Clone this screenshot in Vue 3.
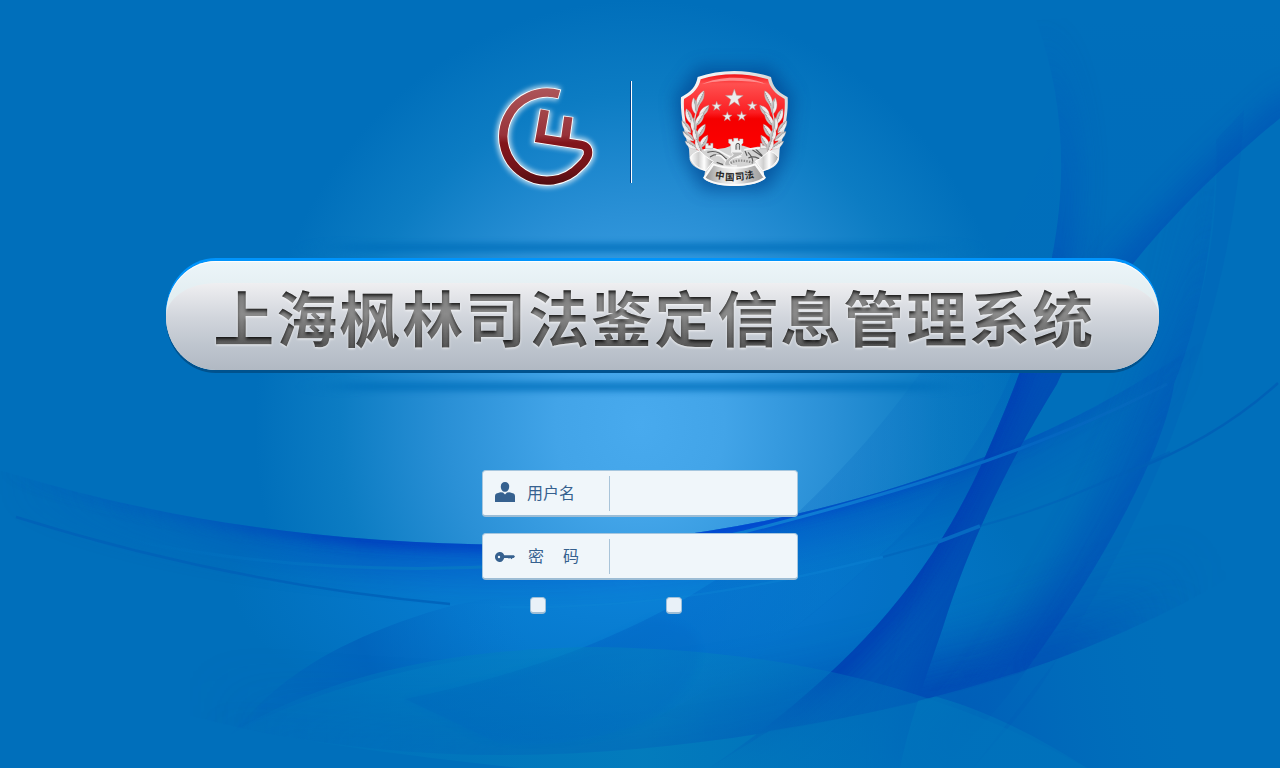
<script setup>
import { ref } from 'vue'

const username = ref('')
const password = ref('')
const rememberName = ref(false)
const rememberPassword = ref(false)

function star(cx, cy, r) {
  const points = []
  for (let i = 0; i < 10; i++) {
    const radius = i % 2 ? r * 0.4 : r
    const angle = (Math.PI * i) / 5 - Math.PI / 2
    points.push(`${(cx + radius * Math.cos(angle)).toFixed(1)},${(cy + radius * Math.sin(angle)).toFixed(1)}`)
  }
  return points.join(' ')
}

const stars = [
  star(208, 130, 28),
  star(155, 154, 15),
  star(262, 153, 15),
  star(187, 185, 15),
  star(230, 184, 15)
]

// x, y, rotation, half-length of each laurel leaf on the left branch
const leaves = [
  [106, 130, 26, 25], [89, 153, -8, 25], [117, 168, 40, 23],
  [72, 184, -20, 24], [104, 192, 32, 25], [64, 216, -36, 23],
  [86, 210, -6, 23], [108, 228, 32, 24], [70, 244, -50, 22],
  [92, 240, -14, 22], [116, 260, 32, 23], [78, 270, -58, 21],
  [100, 271, -20, 22]
]
</script>

<template>
  <main class="page">
    <svg class="backdrop" viewBox="0 0 1280 768" aria-hidden="true">
      <defs>
        <radialGradient id="glow" gradientUnits="userSpaceOnUse" cx="0" cy="0" r="1" gradientTransform="translate(640 425) scale(385 425)">
          <stop offset="0" stop-color="#48aaee" />
          <stop offset=".22" stop-color="#42a4e8" />
          <stop offset=".5" stop-color="#2a90d6" />
          <stop offset=".78" stop-color="#0c7cc3" />
          <stop offset="1" stop-color="#006fbb" />
        </radialGradient>
        <radialGradient id="pool" gradientUnits="userSpaceOnUse" cx="0" cy="0" r="1" gradientTransform="translate(630 580) scale(400 165)">
          <stop offset="0" stop-color="#0c82d8" />
          <stop offset=".5" stop-color="#067ace" />
          <stop offset="1" stop-color="#006fbb" />
        </radialGradient>
        <linearGradient id="arch" gradientUnits="userSpaceOnUse" x1="200" y1="0" x2="1087" y2="0">
          <stop offset="0" stop-color="#0074bd" stop-opacity=".1" />
          <stop offset=".2" stop-color="#0078be" stop-opacity=".5" />
          <stop offset=".5" stop-color="#0688be" stop-opacity=".5" />
          <stop offset=".75" stop-color="#0074bc" stop-opacity=".4" />
          <stop offset="1" stop-color="#0072bc" stop-opacity=".7" />
        </linearGradient>
        <linearGradient id="archSide" gradientUnits="userSpaceOnUse" x1="960" y1="700" x2="1170" y2="660">
          <stop offset="0" stop-color="#0050b6" stop-opacity=".5" />
          <stop offset="1" stop-color="#006abb" stop-opacity="0" />
        </linearGradient>
        <linearGradient id="crest" gradientUnits="userSpaceOnUse" x1="0" y1="0" x2="1200" y2="0">
          <stop offset="0" stop-color="#0050bc" stop-opacity="0" />
          <stop offset=".16" stop-color="#0050bc" stop-opacity=".55" />
          <stop offset=".3" stop-color="#0036bc" />
          <stop offset=".6" stop-color="#0638d2" />
          <stop offset=".8" stop-color="#0040be" stop-opacity=".8" />
          <stop offset="1" stop-color="#0050bc" stop-opacity="0" />
        </linearGradient>
        <linearGradient id="floor" gradientUnits="userSpaceOnUse" x1="200" y1="0" x2="1250" y2="0">
          <stop offset="0" stop-color="#0056b8" stop-opacity="0" />
          <stop offset=".3" stop-color="#0052b8" stop-opacity=".7" />
          <stop offset=".7" stop-color="#003ab2" />
          <stop offset=".82" stop-color="#003eb2" stop-opacity=".75" />
          <stop offset=".95" stop-color="#0060b8" stop-opacity="0" />
        </linearGradient>
        <linearGradient id="band" gradientUnits="userSpaceOnUse" x1="0" y1="20" x2="0" y2="768">
          <stop offset="0" stop-color="#0060bb" stop-opacity="0" />
          <stop offset=".25" stop-color="#0068bb" stop-opacity=".3" />
          <stop offset=".45" stop-color="#0054b6" />
          <stop offset=".88" stop-color="#0056b6" />
          <stop offset="1" stop-color="#0068ba" stop-opacity=".6" />
        </linearGradient>
        <linearGradient id="bandEdge" gradientUnits="userSpaceOnUse" x1="0" y1="20" x2="0" y2="768">
          <stop offset="0" stop-color="#0056ba" stop-opacity="0" />
          <stop offset=".2" stop-color="#0054ba" stop-opacity=".6" />
          <stop offset=".5" stop-color="#003ab6" />
          <stop offset=".88" stop-color="#0036b2" stop-opacity=".85" />
          <stop offset="1" stop-color="#0058b8" stop-opacity=".3" />
        </linearGradient>
        <linearGradient id="outer" gradientUnits="userSpaceOnUse" x1="0" y1="130" x2="0" y2="768">
          <stop offset="0" stop-color="#0060ba" stop-opacity="0" />
          <stop offset=".4" stop-color="#0054b8" stop-opacity=".5" />
          <stop offset=".82" stop-color="#0048b4" stop-opacity=".7" />
          <stop offset="1" stop-color="#0060b8" stop-opacity=".3" />
        </linearGradient>
        <linearGradient id="leftFin" gradientUnits="userSpaceOnUse" x1="210" y1="740" x2="570" y2="590">
          <stop offset="0" stop-color="#0064bc" stop-opacity="0" />
          <stop offset=".45" stop-color="#005eba" stop-opacity=".7" />
          <stop offset=".85" stop-color="#046fcb" stop-opacity="0" />
        </linearGradient>
        <linearGradient id="sail" gradientUnits="userSpaceOnUse" x1="405" y1="0" x2="1000" y2="0">
          <stop offset="0" stop-color="#005cb8" stop-opacity=".5" />
          <stop offset=".45" stop-color="#0060c6" stop-opacity=".36" />
          <stop offset=".75" stop-color="#0064be" stop-opacity=".2" />
          <stop offset="1" stop-color="#0068c0" stop-opacity=".08" />
        </linearGradient>
        <linearGradient id="thinLight" gradientUnits="userSpaceOnUse" x1="120" y1="0" x2="1180" y2="0">
          <stop offset="0" stop-color="#0074c2" stop-opacity="0" />
          <stop offset=".3" stop-color="#0676c4" />
          <stop offset=".65" stop-color="#0e7cd4" />
          <stop offset=".86" stop-color="#0466c2" />
          <stop offset="1" stop-color="#0a6cc0" stop-opacity=".2" />
        </linearGradient>
        <clipPath id="underCrest"><path d="M0 470C160 520 330 545 530 545C700 545 850 507 987 456C1080 420 1180 365 1280 280V768H0Z" /></clipPath>
        <clipPath id="aboveFloor"><path d="M190 716C290 742 400 755 500 755C720 755 930 705 1057 659C1140 627 1210 594 1290 540V300H190Z" /></clipPath>
        <clipPath id="bandClip"><path d="M1036 20C1065 100 1067 180 1052 257C1044 310 1022 373 985 457C930 580 850 672 709 768H900C910 720 925 680 943 627C970 540 1010 460 1057 384C1090 310 1160 215 1290 110V0Z" /></clipPath>
        <clipPath id="outerClip"><path d="M1216 120C1218 230 1200 320 1174 384C1165 450 1100 570 1027 669C1000 710 967 740 943 768H900C925 680 970 540 1057 384C1090 310 1160 215 1216 170Z" /></clipPath>
        <filter id="b2" x="-10%" y="-10%" width="120%" height="120%"><feGaussianBlur stdDeviation="3" /></filter>
        <filter id="b6" x="-30%" y="-30%" width="160%" height="160%"><feGaussianBlur stdDeviation="6" /></filter>
        <filter id="b14" x="-30%" y="-30%" width="160%" height="160%"><feGaussianBlur stdDeviation="14" /></filter>
        <filter id="b24" x="-30%" y="-40%" width="160%" height="180%"><feGaussianBlur stdDeviation="24" /></filter>
        <filter id="soft" x="-10%" y="-300%" width="120%" height="700%"><feGaussianBlur stdDeviation="18 3" /></filter>
      </defs>

      <rect width="1280" height="768" fill="#006fbb" />
      <rect width="1280" height="768" fill="url(#glow)" />

      <g clip-path="url(#underCrest)">
        <rect width="1280" height="768" fill="url(#pool)" />
        <path d="M0 468C160 518 330 543 530 543C700 543 850 505 987 454C1060 426 1130 390 1200 340" fill="none" stroke="url(#crest)" stroke-width="70" opacity=".32" filter="url(#b14)" />
        <path d="M0 470C160 520 330 545 530 545C700 545 850 507 987 456C1060 428 1130 392 1200 342" fill="none" stroke="url(#crest)" stroke-width="13" opacity=".8" filter="url(#b6)" />
      </g>

      <path d="M230 735C270 690 310 655 400 622C470 596 530 590 590 600L600 648C450 650 310 690 230 735Z" fill="url(#leftFin)" />

      <g clip-path="url(#aboveFloor)">
        <path d="M190 716C290 742 400 755 500 755C720 755 930 705 1057 659C1140 627 1210 594 1290 540" fill="none" stroke="url(#floor)" stroke-width="90" opacity=".55" filter="url(#b24)" />
        <path d="M190 716C290 742 400 755 500 755C720 755 930 705 1057 659C1140 627 1210 594 1290 540" fill="none" stroke="url(#floor)" stroke-width="20" opacity=".4" filter="url(#b14)" />
      </g>

      <path d="M405 699C520 676 625 638 714 581C850 485 970 330 1050 143L1058 207C1050 340 980 490 878 557C810 620 720 690 639 724C590 742 540 748 500 744Z" fill="url(#sail)" />
      <path d="M1020 350C990 440 930 510 878 557C810 618 740 675 660 716C740 730 790 700 838 671C940 570 1000 450 1030 350Z" fill="#0056bc" opacity=".16" />

      <g clip-path="url(#outerClip)">
        <path d="M1216 120C1218 230 1200 320 1174 384C1145 480 1090 580 1027 669C1000 710 967 740 943 768" fill="none" stroke="url(#outer)" stroke-width="66" filter="url(#b14)" opacity=".8" />
        <path d="M1216 120C1218 230 1200 320 1174 384C1145 480 1090 580 1027 669" fill="none" stroke="url(#outer)" stroke-width="12" filter="url(#b6)" opacity=".5" />
      </g>
      <path d="M1216 140C1220 230 1202 310 1174 384C1145 480 1090 580 1027 669C1000 710 967 740 943 768H973C1010 725 1035 700 1057 659C1110 575 1165 470 1189 384C1220 300 1240 200 1244 110Z" fill="#005cb9" opacity=".2" />

      <g clip-path="url(#bandClip)">
        <rect x="690" width="590" height="768" fill="url(#band)" opacity=".82" />
        <path d="M1036 20C1065 100 1067 180 1052 257C1044 310 1022 373 985 457C930 580 850 672 709 768" fill="none" stroke="url(#bandEdge)" stroke-width="36" opacity=".65" filter="url(#b14)" />
        <path d="M1052 257C1044 310 1022 373 985 457C930 580 850 672 750 745" fill="none" stroke="url(#bandEdge)" stroke-width="8" opacity=".4" filter="url(#b6)" />
        <path d="M1300 100C1160 215 1090 310 1057 384C1010 460 970 540 943 627C925 680 910 720 900 768" fill="none" stroke="#0042b4" stroke-width="26" opacity=".5" filter="url(#b14)" />
      </g>

      <path d="M769 731C890 711 980 690 1057 659L973 768H709Z" fill="#0072bc" opacity=".5" />
      <path d="M200 754C300 680 440 648 600 647C820 651 960 700 1087 768H520C400 755 300 742 240 727Z" fill="url(#arch)" />
      <path d="M405 699C520 676 590 650 650 618C740 625 690 700 639 724C590 742 540 748 480 738Z" fill="#0062c0" opacity=".18" filter="url(#b2)" />
      <path d="M920 692C985 709 1035 735 1087 768H1180V600L1057 659C1010 677 965 690 920 692Z" fill="url(#archSide)" />

      <path d="M133 541C300 574 520 584 744 532C880 497 1030 455 1167 384" fill="none" stroke="url(#thinLight)" stroke-width="3" />
      <path d="M16 517C160 562 300 590 450 604" fill="none" stroke="#0060b8" stroke-width="2.4" opacity=".8" />
      <path d="M500 607C650 610 780 583 883 557" fill="none" stroke="#0c84d4" stroke-width="2.5" opacity=".4" />
      <path d="M938 542L980 526" stroke="#066ac2" stroke-width="3.5" />
      <path d="M883 557C900 552 920 547 938 542M980 526Q1040 510 1092 487T1170 452" fill="none" stroke="#0060b8" stroke-width="2" opacity=".5" />
      <path d="M1128 472Q1215 440 1278 383" fill="none" stroke="#005fb6" stroke-width="2.4" opacity=".9" />

      <rect x="335" y="243" width="610" height="9" rx="4" fill="#006fbb" opacity=".8" filter="url(#soft)" />
      <rect x="335" y="382" width="610" height="9" rx="4" fill="#006fbb" opacity=".8" filter="url(#soft)" />
    </svg>

    <header class="brand">
      <svg class="mark" viewBox="490 76 112 120" role="img" aria-label="枫林">
        <defs>
          <linearGradient id="maroon" gradientUnits="userSpaceOnUse" x1="0" y1="88" x2="0" y2="186">
            <stop offset="0" stop-color="#ad5559" />
            <stop offset=".48" stop-color="#98333a" />
            <stop offset=".56" stop-color="#82151b" />
            <stop offset=".8" stop-color="#74141a" />
            <stop offset="1" stop-color="#4f0c10" />
          </linearGradient>
          <filter id="halo" x="-30%" y="-30%" width="160%" height="160%"><feGaussianBlur stdDeviation="2.6" /></filter>
        </defs>
        <g fill="none" stroke="#fff">
          <g stroke-width="14" opacity=".7" filter="url(#halo)">
            <path d="M559 94.2A44 44 0 1 0 580 166Q585 162 587.5 156C589.500 149 586 145.500 581 144.800L539.800 138.500L544.800 110" />
            <path d="M568.3 117L564.8 142" />
          </g>
          <g stroke-width="10.2">
            <path d="M559.8 94.4A44 44 0 1 0 580 166Q585 162 587.5 156C589.500 149 586 145.500 581 144.800L539.800 138.500L544.900 109.300" />
            <path d="M568.4 116.300L564.8 142" />
          </g>
        </g>
        <g fill="none" stroke="url(#maroon)" stroke-width="8.4">
          <path d="M559 94.2A44 44 0 1 0 580 166Q585 162 587.5 156C589.500 149 586 145.500 581 144.800L539.800 138.500L544.800 110" />
          <path d="M568.3 117L564.8 142" />
        </g>
      </svg>

      <span class="rule"></span>

      <svg class="emblem" viewBox="-60 -45 540 525" role="img">
        <defs>
          <linearGradient id="silver" x1="0" y1="0" x2="1" y2="1">
            <stop offset="0" stop-color="#fff" />
            <stop offset=".5" stop-color="#d4d4d4" />
            <stop offset="1" stop-color="#f8f8f8" />
          </linearGradient>
          <linearGradient id="red" x1="0" y1="0" x2="0" y2="1">
            <stop offset="0" stop-color="#f21418" />
            <stop offset=".12" stop-color="#ff5050" />
            <stop offset=".48" stop-color="#fb1e22" />
            <stop offset=".56" stop-color="#f40000" />
            <stop offset="1" stop-color="#ff0000" />
          </linearGradient>
          <linearGradient id="leaf" x1="0" y1="0" x2="1" y2="0">
            <stop offset="0" stop-color="#fff" />
            <stop offset=".5" stop-color="#e2e2e2" />
            <stop offset=".55" stop-color="#a9a5a5" />
            <stop offset="1" stop-color="#d8d8d8" />
          </linearGradient>
          <linearGradient id="ribbon" x1="0" y1="0" x2="1" y2="0">
            <stop offset="0" stop-color="#8f8f8f" />
            <stop offset=".3" stop-color="#dcdcdc" />
            <stop offset=".5" stop-color="#f4f4f4" />
            <stop offset=".75" stop-color="#b9b9b9" />
            <stop offset="1" stop-color="#999" />
          </linearGradient>
          <linearGradient id="ribbonTail" x1="0" y1="0" x2="1" y2="0">
            <stop offset="0" stop-color="#fff" />
            <stop offset=".35" stop-color="#cfcfcf" />
            <stop offset=".6" stop-color="#fff" />
            <stop offset="1" stop-color="#a2a2a2" />
          </linearGradient>
          <filter id="shade" x="-40%" y="-40%" width="180%" height="180%"><feGaussianBlur stdDeviation="26" /></filter>
        </defs>
        <path d="M105 50H310L370 130L350 300L300 390H120L70 300L45 130Z" fill="#004490" stroke="#004490" stroke-width="26" opacity=".7" filter="url(#shade)" />
        <path d="M98 66C165 42 250 42 318 66C323 94 336 109 368 127C371 175 358 232 344 282L342 314C337 331 317 343 296 348L299 372C265 400 151 400 117 372L120 348C99 343 79 331 74 314L72 282C58 232 45 175 48 127C80 109 93 94 98 66Z" fill="url(#silver)" />
        <path d="M107 73C170 53 246 53 309 73C314 97 329 116 359 132C362 180 350 225 334 275L300 296H116L82 275C66 225 54 180 57 132C87 116 102 97 107 73Z" fill="url(#red)" />
        <path d="M110 88C165 62 246 62 306 88C250 74 160 74 110 88Z" fill="#ff9a9a" opacity=".85" />

        <g fill="#ececec" stroke="#b6908f" stroke-width="1.5">
          <polygon v-for="(s, i) in stars" :key="i" :points="s" />
        </g>

        <path d="M88 300C104 282 130 276 158 282L180 279L198 272H235L258 280C285 270 312 276 328 298L300 330L212 350L117 326Z" fill="#d3d3d3" />
        <g fill="none" stroke="#5a5a5a" stroke-width="3.5">
          <path d="M127 292C147 286 164 290 179 307M135 306C155 293 171 296 190 318M249 292C259 302 265 316 262 325M262 284C278 294 289 304 303 311M250 309C267 301 280 307 294 320M155 322L174 329M240 287L246 302M272 282L292 302" />
        </g>
        <g fill="none" stroke="#f8f8f8" stroke-width="5">
          <path d="M116 286C137 275 154 281 177 296C194 307 213 311 229 303M238 285C254 277 269 284 289 278M153 301C173 297 173 313 191 325" />
        </g>
        <path d="M121 265H130V271H137V265H144V281H121ZM286 265H293V271H300V265H306V281H286Z" fill="#eee" stroke="#999" stroke-width="1.5" />

        <g v-for="side in 2" :key="side" :transform="side === 2 ? 'translate(416 0) scale(-1 1)' : undefined">
          <path d="M109 135C81 185 79 240 112 285" fill="none" stroke="#d4cdcd" stroke-width="4" />
          <path
            v-for="(l, i) in leaves"
            :key="i"
            :transform="`translate(${l[0]} ${l[1]}) rotate(${l[2]})`"
            :d="`M0 ${-l[3]}C12 ${-l[3] / 3} 11 ${l[3] / 2} 0 ${l[3]}C-11 ${l[3] / 2} -12 ${-l[3] / 3} 0 ${-l[3]}Z`"
            fill="url(#leaf)"
            stroke="#b0a2a2"
            stroke-width="1"
          />
        </g>

        <path d="M191 253H201V259H206V250H219V257H224V252H234V264L230 268V293H197V268L191 264Z" fill="#f2f2f2" stroke="#bbb" stroke-width="1.5" />
        <path d="M213 284V271Q213 265 219 265Q224 265 224 271V284" fill="#d2d2d2" stroke="#555" stroke-width="3" />
        <path d="M198 291H231C239 302 209 304 197 316C186 328 202 333 216 333H180C174 315 196 307 205 300Z" fill="#bdbdbd" stroke="#f2f2f2" stroke-width="3" />
        <path d="M197 324C217 312 247 318 266 323" fill="none" stroke="#8a8a8a" stroke-width="7" stroke-dasharray="4 4" />

        <path d="M76 307C81 298 93 290 104 288C117 300 128 310 145 319L123 347C100 341 82 327 76 307Z" fill="url(#ribbonTail)" stroke="#fff" stroke-width="3" />
        <path d="M340 307C335 298 323 290 312 288C299 300 288 310 271 319L293 347C316 341 334 327 340 307Z" fill="url(#ribbonTail)" stroke="#fff" stroke-width="3" />
        <path d="M145 328C180 342 237 342 271 328L299 368C263 397 153 397 118 368Z" fill="url(#ribbon)" stroke="#fafafa" stroke-width="6" />
        <g class="ribbon-text">
          <text transform="translate(149 369) rotate(9)">中</text>
          <text transform="translate(180 376) rotate(3)">国</text>
          <text transform="translate(211 376) rotate(-4)">司</text>
          <text transform="translate(241 373) rotate(-11)">法</text>
        </g>
      </svg>
    </header>

    <div class="banner">
      <svg class="title" viewBox="0 0 993 109" role="heading" aria-level="1">
        <defs>
          <linearGradient id="steel" gradientUnits="userSpaceOnUse" x1="0" y1="30" x2="0" y2="87">
            <stop offset="0" stop-color="#7c7c7c" />
            <stop offset=".4" stop-color="#8b8b8b" />
            <stop offset="1" stop-color="#555" />
          </linearGradient>
          <filter id="engrave" x="-2%" y="-10%" width="104%" height="125%">
            <feOffset in="SourceAlpha" dy="3" result="moved" />
            <feGaussianBlur in="moved" stdDeviation="1.8" result="blurred" />
            <feComposite in="SourceAlpha" in2="blurred" operator="out" result="inner" />
            <feFlood flood-color="#0c0c0c" flood-opacity=".95" />
            <feComposite in2="inner" operator="in" result="innerDark" />
            <feOffset in="SourceAlpha" dy="1" result="below" />
            <feGaussianBlur in="below" stdDeviation=".8" result="belowSoft" />
            <feFlood flood-color="#fff" flood-opacity=".7" />
            <feComposite in2="belowSoft" operator="in" result="light" />
            <feMerge>
              <feMergeNode in="light" />
              <feMergeNode in="SourceGraphic" />
              <feMergeNode in="innerDark" />
            </feMerge>
          </filter>
        </defs>
        <text x="47.500" y="81" fill="url(#steel)" filter="url(#engrave)">上海枫林司法鉴定信息管理系统</text>
      </svg>
    </div>

    <form class="login" @submit.prevent>
      <label class="field">
        <svg class="icon" viewBox="0 0 20 20">
          <path d="M10 0C12.5 0 14.2 1.6 14.2 4.4C14.2 7.200 12.500 9.800 10 9.800S5.800 7.200 5.800 4.400C5.800 1.600 7.500 0 10 0ZM5.500 10.200L8 10.600L10 12.400L12 10.600L14.500 10.200L18.600 11.500Q20 12.200 20 14V20H0V14Q0 12.200 1.400 11.500Z" />
        </svg>
        <span class="name">用户名</span>
        <input v-model="username" type="text" autocomplete="off" />
      </label>
      <label class="field">
        <svg class="icon" viewBox="0 0 20 20">
          <path fill-rule="evenodd" d="M5 7C7.400 7 8.600 8.400 9.200 10.200H18.800L20 11.600L18.700 13H17.600L16.500 14.200L15.300 13L14 13.600L12.600 13H9.200C8.400 15.200 7.200 17 5 17C2.200 17 0 14.800 0 12S2.200 7 5 7ZM4 10.800A1.200 1.200 0 1 0 4 13.200A1.200 1.200 0 1 0 4 10.800Z" />
        </svg>
        <span class="name spread"><span>密</span><span>码</span></span>
        <input v-model="password" type="password" autocomplete="off" />
      </label>
      <div class="options">
        <input v-model="rememberName" type="checkbox" />
        <input v-model="rememberPassword" type="checkbox" />
      </div>
    </form>
  </main>
</template>

<style>
html,
body {
  margin: 0;
  background: #006fbb;
}
</style>

<style scoped>
.page {
  position: relative;
  width: 1280px;
  height: 768px;
  overflow: hidden;
  font-family: "Liberation Sans", "Noto Sans CJK SC", sans-serif;
}

.backdrop {
  position: absolute;
  inset: 0;
  width: 1280px;
  height: 768px;
}

.brand {
  position: relative;
  display: flex;
  align-items: flex-start;
  height: 221px;
  padding: 40px 0 0 490px;
}

.mark {
  width: 112px;
  height: 120px;
  margin-top: 36px;
}

.rule {
  width: 1px;
  height: 102px;
  margin: 41px 0 0 28px;
  border-left: 1px solid #00438a;
  background: #fff;
}

.emblem {
  width: 180px;
  height: 175px;
  margin-left: 13px;
}

.banner {
  position: relative;
  width: 993px;
  height: 109px;
  margin-left: 166px;
  border-radius: 50px / 54px;
  background: linear-gradient(#ecf5f9, #e2edf0 35%, #dfe7ea);
  box-shadow: 0 -3px 0 #0094fc, 0 3px 0 #00528e, inset 0 1px 1px #fff;
}

.banner::before {
  content: "";
  position: absolute;
  inset: 22px 0 0;
  border-radius: 50px 50px 50px 50px / 34px 34px 53px 53px;
  background: linear-gradient(#efeff1, #d1d5dc 40%, #bfc6cf 70%, #b1b9c3);
}

.title {
  position: relative;
  display: block;
  width: 993px;
  height: 109px;
}

.title text {
  font-family: "Noto Sans CJK SC", sans-serif;
  font-size: 60.5px;
  font-weight: 700;
  letter-spacing: 2.5px;
}

.ribbon-text {
  font-family: "Noto Sans CJK SC", sans-serif;
  font-size: 28px;
  font-weight: 700;
  fill: #242424;
}

.login {
  position: relative;
  display: flex;
  flex-direction: column;
  gap: 16px;
  width: 316px;
  margin: 100px auto 0;
}

.field {
  box-sizing: border-box;
  display: flex;
  align-items: center;
  height: 47px;
  padding: 0 4px 0 12px;
  border: 1px solid #a6c6de;
  border-bottom: 2px solid #9dbdd5;
  border-radius: 4px;
  background: #f0f6fa;
}

.icon {
  width: 20px;
  height: 20px;
  margin-bottom: 3px;
  fill: #36618f;
}

.name {
  width: 82px;
  height: 35px;
  margin: 1px 0 0 12px;
  border-right: 1px solid #a9c4d9;
  color: #36618f;
  font: 16px/33px "Noto Sans CJK SC", sans-serif;
  white-space: nowrap;
}

.spread {
  display: flex;
  box-sizing: border-box;
  gap: 19px;
  width: 83px;
  padding-left: 1px;
  line-height: 32px;
}

.field input {
  flex: 1;
  min-width: 0;
  height: 35px;
  padding: 0 8px;
  border: 0;
  outline: 0;
  background: transparent;
  color: #36618f;
  font-size: 16px;
}

.options {
  display: flex;
  gap: 120px;
  margin: 1px 0 0 48px;
}

.options input {
  appearance: none;
  box-sizing: border-box;
  width: 16px;
  height: 17px;
  margin: 0;
  border: 1px solid #9fc0da;
  border-bottom: 2px solid #9dbdd5;
  border-radius: 4px;
  background: #e9f1f8;
}
</style>
